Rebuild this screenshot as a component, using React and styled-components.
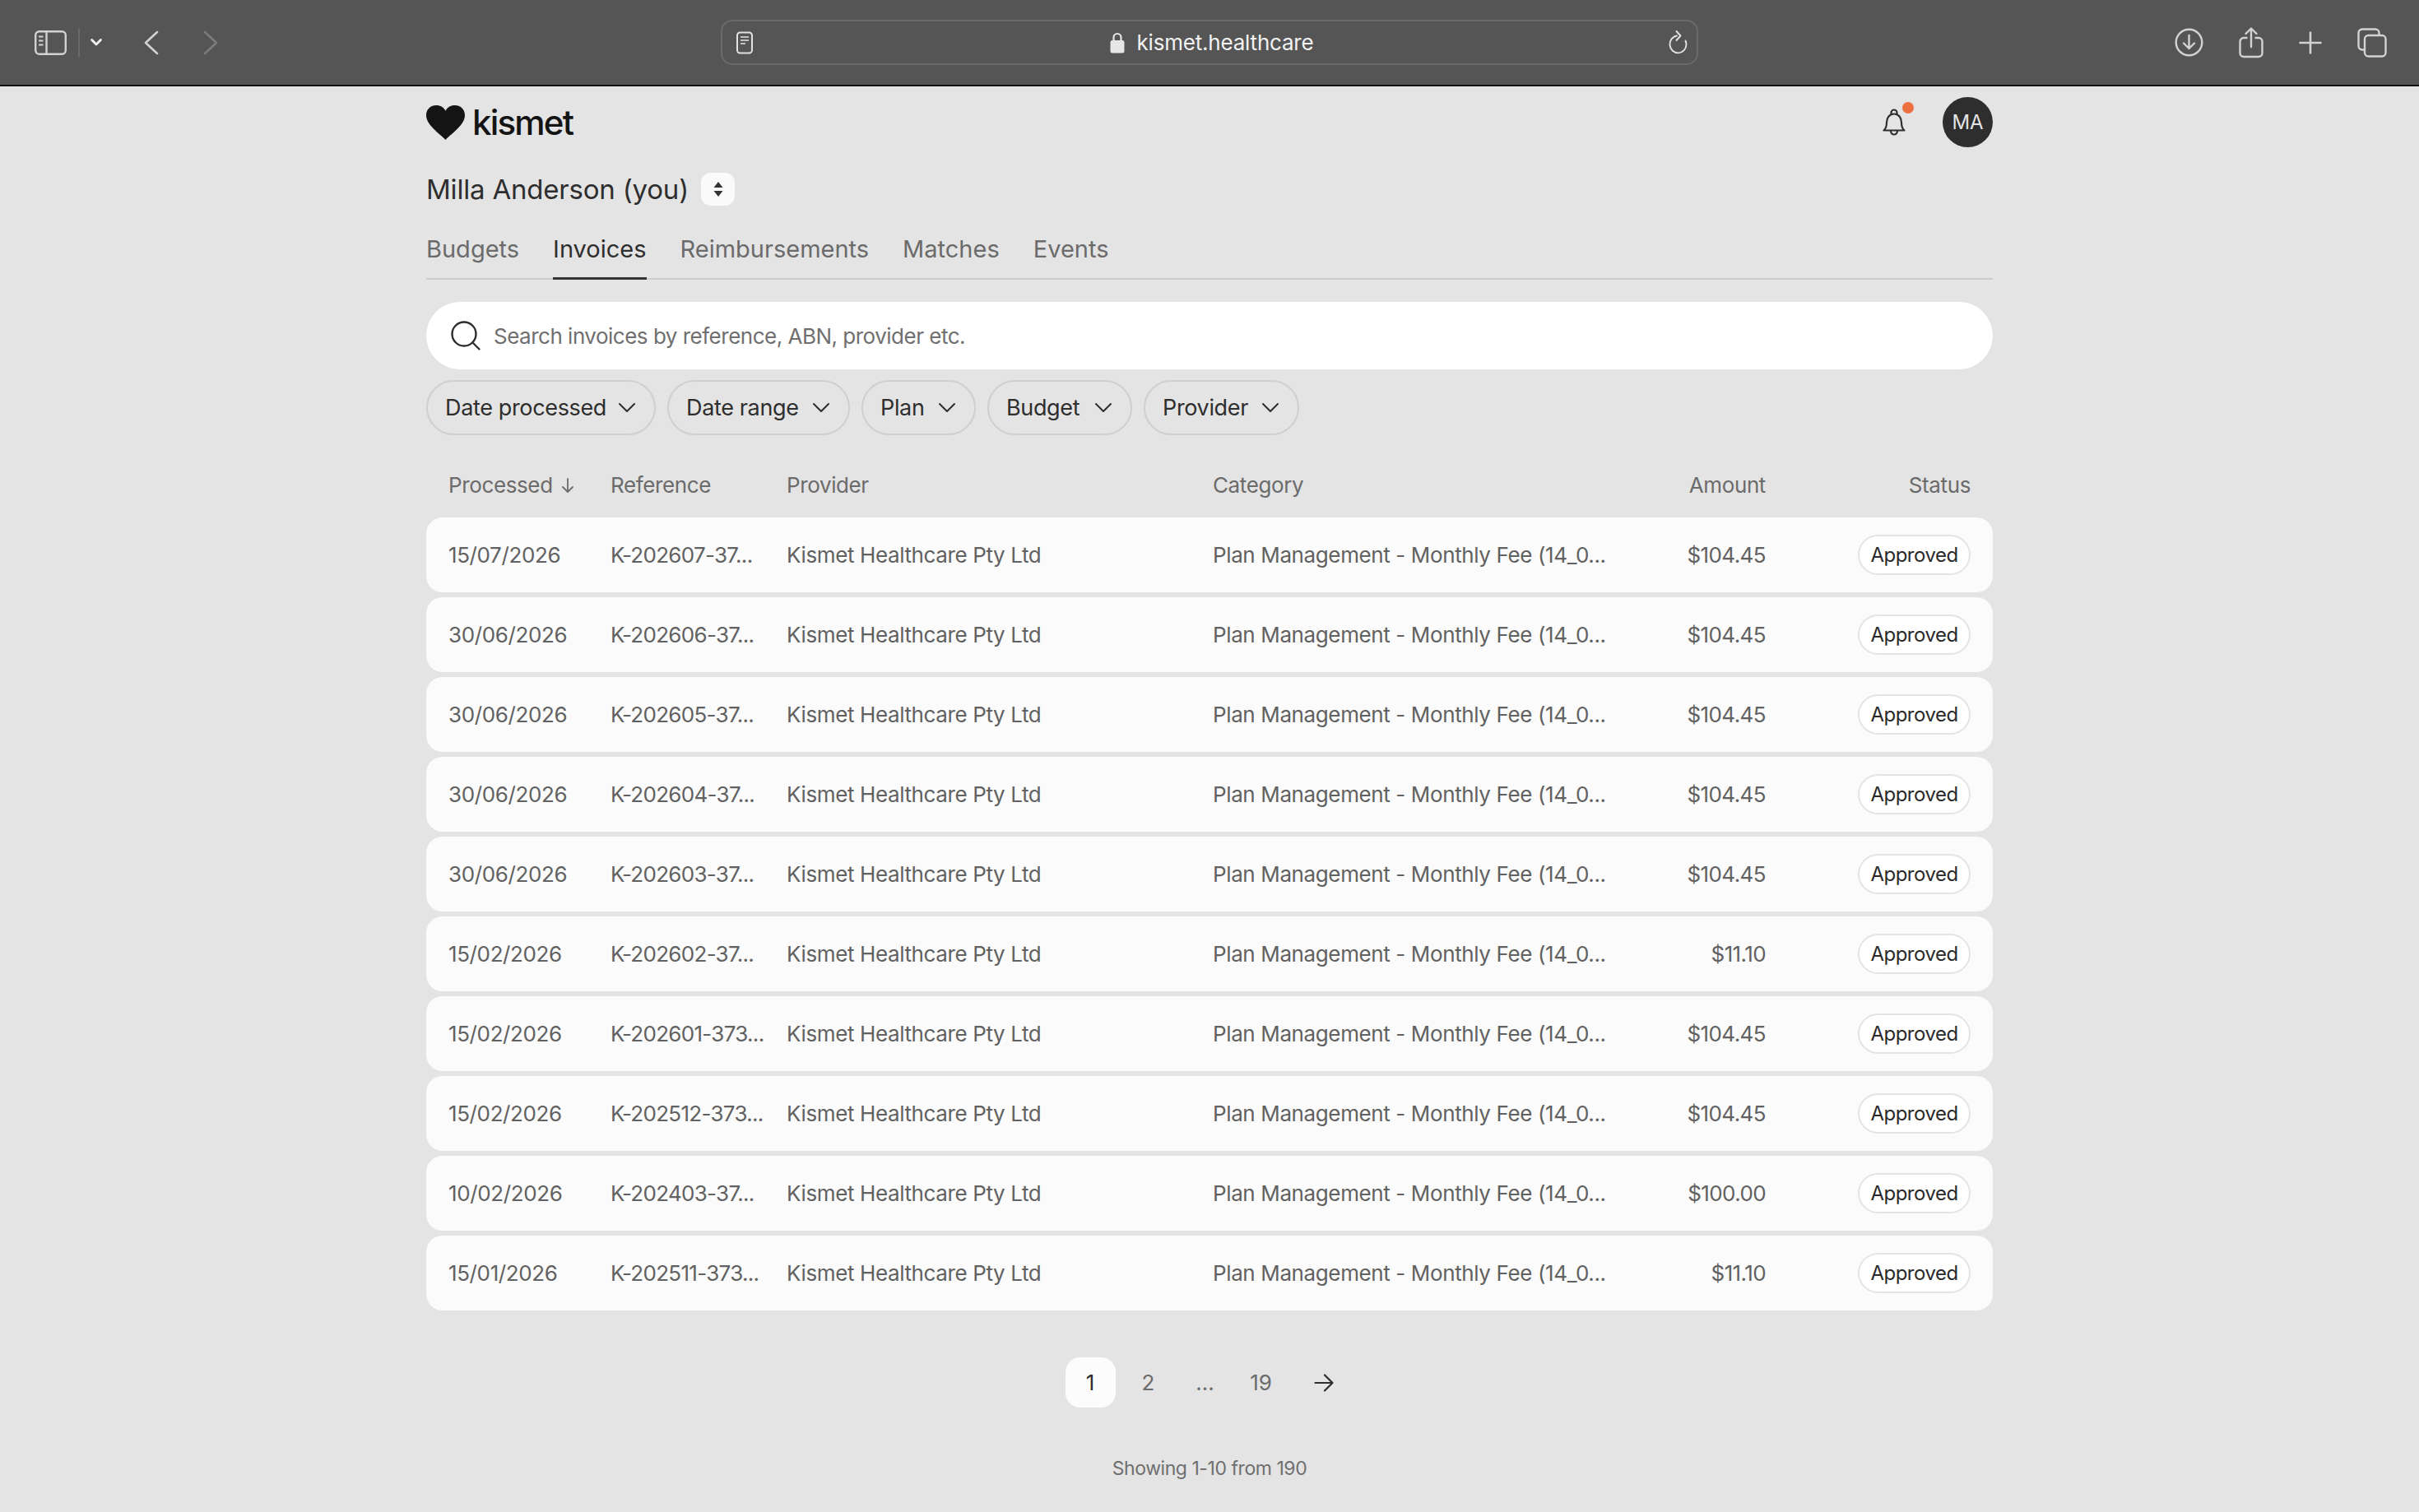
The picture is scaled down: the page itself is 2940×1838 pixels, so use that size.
import React from "react";
import styled, { createGlobalStyle } from "styled-components";

const invoices = [
  ["15/07/2026", "K-202607-37...", "$104.45"],
  ["30/06/2026", "K-202606-37...", "$104.45"],
  ["30/06/2026", "K-202605-37...", "$104.45"],
  ["30/06/2026", "K-202604-37...", "$104.45"],
  ["30/06/2026", "K-202603-37...", "$104.45"],
  ["15/02/2026", "K-202602-37...", "$11.10"],
  ["15/02/2026", "K-202601-373...", "$104.45"],
  ["15/02/2026", "K-202512-373...", "$104.45"],
  ["10/02/2026", "K-202403-37...", "$100.00"],
  ["15/01/2026", "K-202511-373...", "$11.10"],
];

const tabs = ["Budgets", "Invoices", "Reimbursements", "Matches", "Events"];
const filters = [
  ["Date processed", 279],
  ["Date range", 222],
  ["Plan", 139],
  ["Budget", 176],
  ["Provider", 189],
];

const Chevron = () => (
  <svg width="22" height="13" viewBox="0 0 22 13" fill="none" stroke="#2e2e2e" strokeWidth="2" strokeLinecap="round" strokeLinejoin="round">
    <path d="M2 2l9 9 9-9" />
  </svg>
);

const App = () => (
  <Page>
    <GlobalStyle />
    <BrowserBar>
      <BarLeft>
        <svg width="39" height="30" viewBox="0 0 39 30" fill="none" stroke="#d2d2d2" strokeWidth="2.4">
          <rect x="1.2" y="1.2" width="36.6" height="27.6" rx="4.5" />
          <path d="M14.5 1.2v27.6" />
          <path d="M5 7.5h5.5M5 12.5h5.5M5 17.5h5.5" strokeWidth="2" />
        </svg>
        <BarDivider />
        <svg width="14" height="9" viewBox="0 0 14 9" fill="none" stroke="#f4f4f4" strokeWidth="2.8" strokeLinecap="round" strokeLinejoin="round">
          <path d="M1.6 1.6L7 7l5.4-5.4" />
        </svg>
        <BackIcon width="18" height="30" viewBox="0 0 18 30" fill="none" stroke="#d2d2d2" strokeWidth="2.6" strokeLinecap="round" strokeLinejoin="round">
          <path d="M16 2L2 15l14 13" />
        </BackIcon>
        <ForwardIcon width="18" height="30" viewBox="0 0 18 30" fill="none" stroke="#7c7c7c" strokeWidth="2.6" strokeLinecap="round" strokeLinejoin="round">
          <path d="M2 2l14 13L2 28" />
        </ForwardIcon>
      </BarLeft>
      <UrlBar>
        <svg width="22" height="28" viewBox="0 0 22 28" fill="none" stroke="#e2e2e2" strokeWidth="2">
          <rect x="2" y="1.5" width="18" height="25" rx="3.5" />
          <path d="M6 7h10M6 11h10M6 15h6" strokeWidth="1.7" />
        </svg>
        <UrlCenter>
          <svg width="18" height="26" viewBox="0 0 18 26">
            <path d="M4.5 11V6.5a4.5 4.5 0 0 1 9 0V11" fill="none" stroke="#e6e6e6" strokeWidth="2.2" />
            <rect x="0.5" y="10" width="17" height="15.5" rx="2.5" fill="#e6e6e6" />
          </svg>
          <UrlText>kismet.healthcare</UrlText>
        </UrlCenter>
        <ReloadIcon width="24" height="30" viewBox="0 0 24 30" fill="none" stroke="#e2e2e2" strokeWidth="1.9" strokeLinecap="round" strokeLinejoin="round">
          <path d="M11 6.500a10 10.500 0 1 0 11.500 10.500c0-1.500-.3-3-1-4.500" />
          <path d="M10.500 1l5 5.500-5 5.500" />
        </ReloadIcon>
      </UrlBar>
      <BarRight>
        <svg width="35" height="35" viewBox="0 0 35 35" fill="none" stroke="#d2d2d2" strokeWidth="2.4" strokeLinecap="round" strokeLinejoin="round">
          <circle cx="17.5" cy="17.5" r="15.8" />
          <path d="M17.5 9v16M11 18.5l6.5 6.5 6.5-6.5" />
        </svg>
        <svg width="30" height="38" viewBox="0 0 30 38" fill="none" stroke="#d2d2d2" strokeWidth="2.4" strokeLinecap="round" strokeLinejoin="round">
          <path d="M9.5 13H6a4.5 4.5 0 0 0-4.5 4.5v14A4.5 4.5 0 0 0 6 36h18a4.500 4.500 0 0 0 4.500-4.500v-14A4.500 4.500 0 0 0 24 13h-3.500" />
          <path d="M15 24V2M8.500 8L15 1.500 21.500 8" />
        </svg>
        <svg width="28" height="28" viewBox="0 0 28 28" fill="none" stroke="#d2d2d2" strokeWidth="2.6" strokeLinecap="round">
          <path d="M14 1.500v25M1.500 14h25" />
        </svg>
        <svg width="36" height="36" viewBox="0 0 36 36" fill="none" stroke="#d2d2d2" strokeWidth="2.4" strokeLinejoin="round">
          <path d="M8 26.500H6a4.500 4.500 0 0 1-4.500-4.500V6A4.500 4.500 0 0 1 6 1.500h16A4.500 4.500 0 0 1 26.500 6v2" />
          <rect x="9" y="9" width="25.500" height="25.500" rx="4.500" />
        </svg>
      </BarRight>
    </BrowserBar>

    <Main>
      <TopRow>
        <Logo>
          <svg width="47" height="42" viewBox="0 0 46 41" fill="#141414">
            <path d="M23 41C15 33 0 23 0 12 0 4.500 5.500 0 12 0c5 0 9 2.500 11 6.500C25 2.500 29 0 34 0c6.500 0 12 4.500 12 12 0 11-15 21-23 29z" />
          </svg>
          <LogoText>kismet</LogoText>
        </Logo>
        <TopActions>
          <BellWrap>
            <svg width="28" height="33" viewBox="0 0 28 33" fill="none" stroke="#2e2e2e" strokeWidth="2.200" strokeLinecap="round" strokeLinejoin="round">
              <path d="M1.500 26.500h25c-2.500-2-3.500-4.500-3.500-9.500 0-6-3.500-10.500-9-10.500S5 11 5 17c0 5-1 7.500-3.500 9.500z" />
              <path d="M10.500 6.500V5a3.500 3.500 0 0 1 7 0v1.500M10 27c0 6 8 6 8 0" />
            </svg>
            <BellDot />
          </BellWrap>
          <Avatar>MA</Avatar>
        </TopActions>
      </TopRow>

      <NameRow>
        <PersonName>Milla Anderson (you)</PersonName>
        <PersonSwitch>
          <svg width="12" height="20" viewBox="0 0 12 20" fill="#333">
            <path d="M6 1l5.500 7H.5zM6 19L.5 12h11z" />
          </svg>
        </PersonSwitch>
      </NameRow>

      <Tabs>
        {tabs.map((tab) => (
          <Tab key={tab} $active={tab === "Invoices"}>{tab}</Tab>
        ))}
      </Tabs>

      <SearchBar>
        <svg width="38" height="38" viewBox="0 0 38 38" fill="none" stroke="#2e2e2e" strokeWidth="2.400" strokeLinecap="round">
          <circle cx="17" cy="17" r="14.500" />
          <path d="M27.500 27.500l8 8" />
        </svg>
        <SearchHint>Search invoices by reference, ABN, provider etc.</SearchHint>
      </SearchBar>

      <Filters>
        {filters.map(([filter, width]) => (
          <FilterChip key={filter} $width={width}>
            {filter}
            <Chevron />
          </FilterChip>
        ))}
      </Filters>

      <HeaderRow>
        <SortLabel>
          Processed
          <svg width="18" height="20" viewBox="0 0 18 20" fill="none" stroke="#6b6b6b" strokeWidth="1.800" strokeLinecap="round" strokeLinejoin="round">
            <path d="M9 2v16M3 12l6 6 6-6" />
          </svg>
        </SortLabel>
        <span>Reference</span>
        <span>Provider</span>
        <span>Category</span>
        <AmountCell>Amount</AmountCell>
        <StatusCell>Status</StatusCell>
      </HeaderRow>

      <Rows>
        {invoices.map(([date, reference, amount]) => (
          <Row key={reference}>
            <span>{date}</span>
            <ReferenceCell>{reference}</ReferenceCell>
            <span>Kismet Healthcare Pty Ltd</span>
            <span>Plan Management - Monthly Fee (14_0...</span>
            <PriceCell>{amount}</PriceCell>
            <StatusCell>
              <StatusChip>Approved</StatusChip>
            </StatusCell>
          </Row>
        ))}
      </Rows>

      <Pagination>
        <PageButton $current $width={61}>1</PageButton>
        <PageButton $width={64}>2</PageButton>
        <PageButton $width={58}>...</PageButton>
        <PageButton $width={62}>19</PageButton>
        <PageButton $width={74}>
          <svg width="24" height="22" viewBox="0 0 24 22" fill="none" stroke="#2e2e2e" strokeWidth="2.200" strokeLinecap="round" strokeLinejoin="round">
            <path d="M1.500 11h21M13 1.500l9.500 9.500-9.500 9.500" />
          </svg>
        </PageButton>
      </Pagination>

      <Showing>Showing 1-10 from 190</Showing>
    </Main>
  </Page>
);

export default App;

const GlobalStyle = createGlobalStyle`
  html, body {
    margin: 0;
    padding: 0;
    background: #e4e4e4;
  }
  * {
    box-sizing: border-box;
  }
`;

const Page = styled.div`
  height: 100vh;
  overflow: hidden;
  background: #e4e4e4;
  color: #2e2e2e;
  font-family: Inter, "Liberation Sans", sans-serif;
`;

const BrowserBar = styled.header`
  height: 105px;
  padding: 0 39px;
  display: grid;
  grid-template-columns: 1fr 1188px 1fr;
  align-items: center;
  background: #555555;
  border-bottom: 2px solid #111;
`;

const BarLeft = styled.div`
  padding-left: 3px;
  display: flex;
  align-items: center;
`;

const BarDivider = styled.div`
  width: 2px;
  height: 36px;
  margin: 0 13px 0 14px;
  background: #6a6a6a;
`;

const BackIcon = styled.svg`
  margin-left: 51px;
`;

const ForwardIcon = styled.svg`
  margin-left: 54px;
`;

const BarRight = styled.div`
  display: flex;
  align-items: center;
  justify-content: flex-end;
  gap: 43px;
`;

const UrlBar = styled.div`
  height: 55px;
  padding: 0 11px 0 16px;
  display: grid;
  grid-template-columns: 1fr auto 1fr;
  align-items: center;
  border: 2px solid #6a6a6a;
  border-radius: 14px;
`;

const UrlCenter = styled.div`
  display: flex;
  align-items: center;
  gap: 15px;
`;

const UrlText = styled.span`
  font-size: 26px;
  color: #f2f2f2;
  letter-spacing: -0.2px;
`;

const ReloadIcon = styled.svg`
  justify-self: end;
`;

const Main = styled.main`
  width: 1904px;
  margin: 0 auto;
  padding-top: 13px;
`;

const TopRow = styled.div`
  height: 61px;
  display: flex;
  align-items: center;
  justify-content: space-between;
`;

const Logo = styled.div`
  display: flex;
  align-items: center;
  gap: 9px;
`;

const LogoText = styled.span`
  font-size: 42px;
  font-weight: 500;
  letter-spacing: -1.8px;
  line-height: 1;
  color: #141414;
`;

const TopActions = styled.div`
  display: flex;
  align-items: center;
  gap: 45px;
`;

const BellWrap = styled.div`
  position: relative;
  display: flex;
`;

const BellDot = styled.span`
  position: absolute;
  top: -8px;
  right: -10px;
  width: 14px;
  height: 14px;
  border-radius: 50%;
  background: #ec7040;
`;

const Avatar = styled.div`
  width: 61px;
  height: 61px;
  display: flex;
  align-items: center;
  justify-content: center;
  border-radius: 50%;
  background: #2e2e2e;
  color: #e4e4e4;
  font-size: 24px;
`;

const NameRow = styled.div`
  margin-top: 30px;
  display: flex;
  align-items: center;
  gap: 15px;
`;

const PersonName = styled.h1`
  margin: 0;
  font-size: 33px;
  font-weight: 400;
  line-height: 42px;
  letter-spacing: -0.2px;
`;

const PersonSwitch = styled.button`
  width: 41px;
  height: 40px;
  padding: 0;
  display: flex;
  align-items: center;
  justify-content: center;
  border: none;
  border-radius: 12px;
  background: #fafafa;
`;

const Tabs = styled.nav`
  margin-top: 33px;
  display: flex;
  gap: 41px;
  border-bottom: 2px solid #cccccc;
`;

const Tab = styled.div`
  height: 56px;
  margin-bottom: -2px;
  padding: 1px 0 16px;
  font-size: 29px;
  line-height: 36px;
  color: ${(p) => (p.$active ? "#2e2e2e" : "#6b6b6b")};
  border-bottom: 3px solid ${(p) => (p.$active ? "#333" : "transparent")};
`;

const SearchBar = styled.div`
  margin-top: 27px;
  height: 82px;
  padding: 0 29px;
  display: flex;
  align-items: center;
  gap: 15px;
  border-radius: 41px;
  background: #fff;
`;

const SearchHint = styled.span`
  font-size: 26px;
  letter-spacing: -0.5px;
  color: #6f6f6f;
`;

const Filters = styled.div`
  margin-top: 13px;
  display: flex;
  gap: 14px;
`;

const FilterChip = styled.button`
  width: ${(p) => p.$width}px;
  height: 67px;
  padding: 0 22px 0 21px;
  display: flex;
  align-items: center;
  justify-content: space-between;
  border: 2px solid #cfcfcf;
  border-radius: 34px;
  background: transparent;
  color: #2e2e2e;
  font-family: inherit;
  font-size: 27px;
  letter-spacing: -0.35px;
`;

const tableColumns = `
  display: grid;
  grid-template-columns: 197px 214px 518px 480px 192px 249px;
  align-items: center;
  padding: 0 27px;
  font-size: 26px;
  letter-spacing: -0.38px;
  white-space: nowrap;
`;

const HeaderRow = styled.div`
  ${tableColumns}
  height: 100px;
  padding-top: 21px;
  color: #6b6b6b;
`;

const SortLabel = styled.span`
  display: flex;
  align-items: center;
  gap: 9px;
`;

const AmountCell = styled.span`
  text-align: right;
`;

const PriceCell = styled(AmountCell)`
  letter-spacing: -0.6px;
`;

const ReferenceCell = styled.span`
  letter-spacing: -0.7px;
`;

const StatusCell = styled.span`
  display: flex;
  justify-content: flex-end;
`;

const Rows = styled.div`
  display: flex;
  flex-direction: column;
  gap: 6px;
`;

const Row = styled.div`
  ${tableColumns}
  height: 91px;
  padding-bottom: 1px;
  border-radius: 20px;
  background: #fbfbfb;
  color: #616161;
`;

const StatusChip = styled.span`
  height: 49px;
  width: 137px;
  display: flex;
  align-items: center;
  justify-content: center;
  border: 2px solid #e4e4e4;
  border-radius: 25px;
  background: #fff;
  color: #2a2a2a;
  font-size: 24px;
  letter-spacing: -0.5px;
`;

const Pagination = styled.div`
  margin-top: 57px;
  display: flex;
  justify-content: center;
  gap: 8px;
`;

const PageButton = styled.div`
  width: ${(p) => p.$width}px;
  height: 61px;
  display: flex;
  align-items: center;
  justify-content: center;
  border-radius: 18px;
  background: ${(p) => (p.$current ? "#fcfcfc" : "transparent")};
  color: ${(p) => (p.$current ? "#2e2e2e" : "#6b6b6b")};
  font-size: 26px;
`;

const Showing = styled.div`
  margin-top: 59px;
  text-align: center;
  font-size: 23px;
  line-height: 30px;
  letter-spacing: -0.45px;
  color: #6f6f6f;
`;
